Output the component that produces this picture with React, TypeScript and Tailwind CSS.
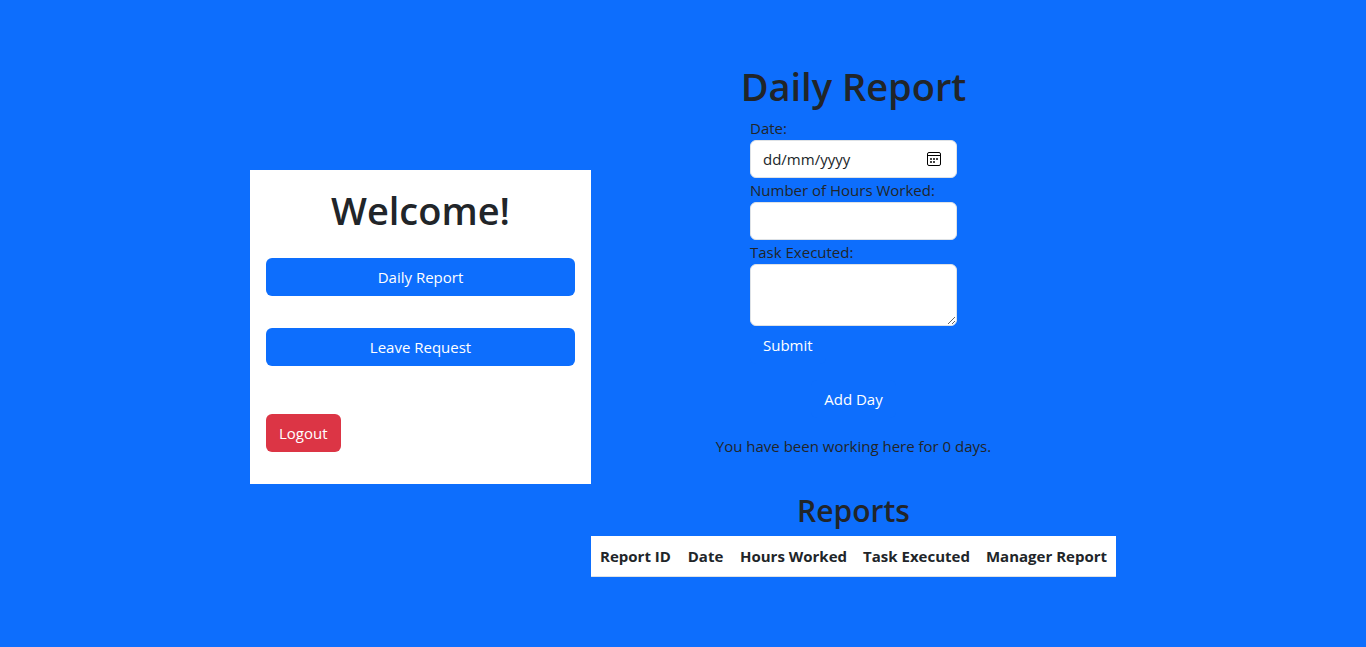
import type { ReactNode } from "react";

const columns = [
  { label: "Report ID", width: "w-[89px]" },
  { label: "Date", width: "w-[51px]" },
  { label: "Hours Worked", width: "w-[125px]" },
  { label: "Task Executed", width: "w-[121px]" },
  { label: "Manager Report", width: "w-[139px]" },
];

const field =
  "block w-full rounded-md border border-[#dee2e6] bg-white px-3 py-1.5 text-[15px] leading-6 text-[#212529] placeholder:text-[#212529] placeholder:opacity-100";

function Button({ className, children, type = "button" }: { className: string; children: ReactNode; type?: "button" | "submit" }) {
  return (
    <button type={type} className={`rounded-md border border-transparent px-3 py-1.5 text-[15px] leading-6 text-white ${className}`}>
      {children}
    </button>
  );
}

function CalendarIcon() {
  return (
    <svg width="14" height="14" viewBox="0 0 14 14" fill="none" aria-hidden="true">
      <rect x="0.5" y="0.5" width="13" height="13" rx="1.5" stroke="#000" />
      <path d="M1 3.5h12" stroke="#000" />
      <path d="M3 6h2v2H3zM6 6h2v2H6zM9 6h2v2H9zM3 9h2v2H3zM6 9h2v2H6z" fill="#444" />
    </svg>
  );
}

export default function App() {
  return (
    <div className="flex min-h-screen items-center justify-center bg-[#0d6efd] pt-[60px] pb-[54px] font-['Open_Sans',sans-serif] text-[15px] leading-6 text-[#212529]">
      <nav aria-label="Main" className="flex w-[341px] flex-col bg-white p-4 pb-8">
        <h1 className="mb-6 text-center text-[38px] leading-12 font-semibold">Welcome!</h1>
        <Button className="mb-8 bg-[#0d6efd]">Daily Report</Button>
        <Button className="mb-12 bg-[#0d6efd]">Leave Request</Button>
        <Button className="self-start bg-[#dc3545]">Logout</Button>
      </nav>

      <main className="flex flex-col items-center">
        <h1 className="mt-0.5 mb-1.5 text-[38px] leading-12 font-semibold">Daily Report</h1>
        <form className="w-[207px]" onSubmit={(e) => e.preventDefault()}>
          <label htmlFor="date" className="block">Date:</label>
          <div className="relative">
            <input id="date" type="text" placeholder="dd/mm/yyyy" className={field} />
            <button type="button" aria-label="Choose date" className="absolute top-3 right-4">
              <CalendarIcon />
            </button>
          </div>
          <label htmlFor="hours" className="block">Number of Hours Worked:</label>
          <input id="hours" type="text" className={field} />
          <label htmlFor="task" className="block">Task Executed:</label>
          <textarea id="task" rows={2} className={field} />
          <Button type="submit" className="bg-[#0d6efd]">Submit</Button>
        </form>
        <Button className="my-4 bg-[#0d6efd]">Add Day</Button>
        <p>You have been working here for 0 days.</p>
        <h2 className="mt-8 mb-1 text-[30px] leading-[42px] font-semibold">Reports</h2>
        <table className="mb-4 table-fixed border-collapse bg-white">
          <thead>
            <tr className="border-b border-[#dee2e6]">
              {columns.map((c) => (
                <th key={c.label} scope="col" className={`py-2 text-center font-bold whitespace-nowrap ${c.width}`}>
                  {c.label}
                </th>
              ))}
            </tr>
          </thead>
        </table>
      </main>
    </div>
  );
}
